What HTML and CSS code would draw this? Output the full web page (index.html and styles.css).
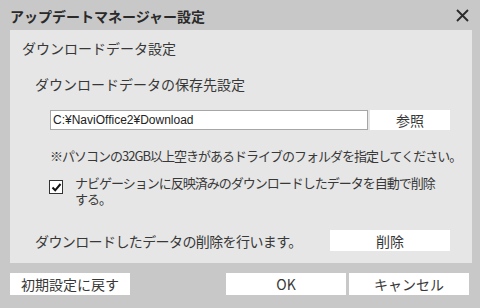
FILE: index.html
```html
<!DOCTYPE html>
<html lang="ja">
<head>
    <meta charset="UTF-8">
    <title>アップデートマネージャー設定</title>
    <link rel="stylesheet" href="styles.css">
</head>
<body>
    <div class="dialog">
        <header class="title-bar">
            <h1>アップデートマネージャー設定</h1>
            <button class="close-btn" aria-label="閉じる">
                <svg width="13" height="13" viewBox="0 0 13 13">
                    <path d="M1 1 L12 12 M12 1 L1 12" stroke="#2b2b2b" stroke-width="1.9" fill="none"/>
                </svg>
            </button>
        </header>

        <!-- 設定パネル -->
        <section class="panel">
            <h2 class="panel-title">ダウンロードデータ設定</h2>
            <h3 class="sub-title">ダウンロードデータの保存先設定</h3>

            <div class="path-row">
                <input class="path-input" type="text" value="C:¥NaviOffice2¥Download">
                <button class="btn btn-browse">参照</button>
            </div>
            <p class="note">※パソコンの32GB以上空きがあるドライブのフォルダを指定してください。</p>

            <label class="check-row">
                <span class="check-box">
                    <svg width="11" height="11" viewBox="0 0 11 11">
                        <path d="M1.5 5.5 L4.2 8.3 L9.5 2" stroke="#111" stroke-width="2" fill="none"/>
                    </svg>
                </span>
                <span class="check-text">ナビゲーションに反映済みのダウンロードしたデータを自動で削除する。</span>
            </label>

            <div class="delete-row">
                <span class="delete-label">ダウンロードしたデータの削除を行います。</span>
                <button class="btn btn-delete">削除</button>
            </div>
        </section>

        <footer class="footer">
            <button class="btn btn-reset">初期設定に戻す</button>
            <div class="footer-right">
                <button class="btn btn-footer">OK</button>
                <button class="btn btn-footer">キャンセル</button>
            </div>
        </footer>
    </div>
</body>
</html>
```

FILE: styles.css
```css
* {
    margin: 0;
    padding: 0;
    box-sizing: border-box;
}

body {
    width: 480px;
    height: 308px;
    background: #c8c8c8;
    font-family: "Noto Sans CJK JP", "Noto Sans", sans-serif;
    color: #383838;
    overflow: hidden;
}

.dialog {
    width: 480px;
    height: 308px;
    display: flex;
    flex-direction: column;
}

/* タイトルバー */
.title-bar {
    height: 30px;
    display: flex;
    align-items: center;
    justify-content: space-between;
    padding: 1px 11px 0 10px;
}

.title-bar h1 {
    font-size: 14px;
    font-weight: 700;
    color: #2a2a2a;
    line-height: 20px;
}

.close-btn {
    background: none;
    border: none;
    width: 13px;
    height: 13px;
    display: flex;
}

/* パネル */
.panel {
    margin: 0 8px 0 10px;
    height: 233px;
    background: #e6e6e6;
    display: flex;
    flex-direction: column;
}

.panel-title {
    font-size: 14px;
    font-weight: 400;
    line-height: 20px;
    margin-top: 8px;
    padding-left: 12px;
}

.sub-title {
    font-size: 14px;
    font-weight: 400;
    line-height: 20px;
    margin-top: 16px;
    padding-left: 25px;
}

.path-row {
    display: flex;
    gap: 2px;
    margin-top: 16px;
    padding-left: 40px;
}

.path-input {
    width: 318px;
    height: 20px;
    border: 1px solid #a6a6a6;
    background: #fff;
    font-family: "Liberation Sans", sans-serif;
    font-size: 12px;
    color: #222;
    padding: 0 2px;
    outline: none;
}

.btn {
    background: #fff;
    border: none;
    font-family: "Noto Sans CJK JP", "Noto Sans", sans-serif;
    font-size: 14px;
    color: #383838;
    line-height: 20px;
}

.btn-browse {
    width: 80px;
    height: 20px;
}

.note {
    font-size: 13px;
    letter-spacing: -1px;
    line-height: 18px;
    margin-top: 17px;
    padding-left: 40px;
    white-space: nowrap;
}

.check-row {
    display: flex;
    margin-top: 10px;
    padding-left: 39px;
}

.check-box {
    width: 14px;
    height: 14px;
    margin-top: 5px;
    border: 1px solid #333;
    background: #fff;
    display: flex;
    align-items: center;
    justify-content: center;
}

.check-text {
    width: 366px;
    margin-left: 12px;
    font-size: 13px;
    letter-spacing: -1px;
    line-height: 16px;
}

.delete-row {
    display: flex;
    align-items: center;
    margin-top: 23px;
    padding-left: 25px;
}

.delete-label {
    width: 295px;
    font-size: 14px;
    letter-spacing: -0.6px;
}

.btn-delete {
    width: 120px;
    height: 21px;
}

/* フッター */
.footer {
    display: flex;
    justify-content: space-between;
    margin-top: 10px;
    padding: 0 11px 0 10px;
}

.footer-right {
    display: flex;
    gap: 3px;
}

.btn-reset,
.btn-footer {
    width: 120px;
    height: 22px;
}
```
